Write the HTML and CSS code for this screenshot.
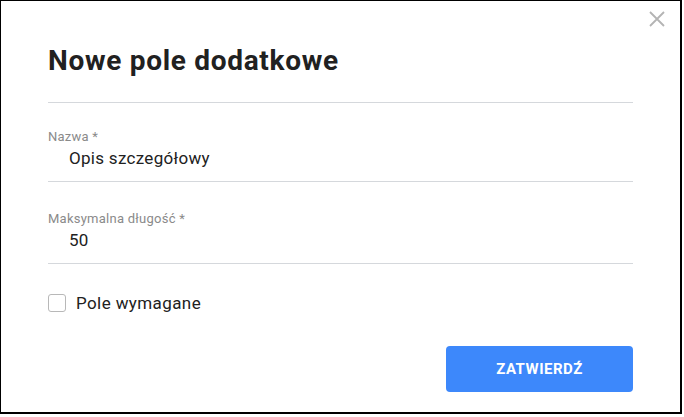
FILE: index.html
```html
<!DOCTYPE html>
<html lang="pl">
<head>
    <meta charset="UTF-8">
    <title>Nowe pole dodatkowe</title>
    <link rel="stylesheet" href="styles.css">
</head>
<body>
  <div id="dialog">
    <button id="closeBtn" aria-label="Zamknij">
      <svg width="16" height="16" viewBox="0 0 16 16"><path d="M1 1L15 15M15 1L1 15" stroke="#b4b4b4" stroke-width="1.8" fill="none"/></svg>
    </button>
    <h1 id="title">Nowe pole dodatkowe</h1>
    <div class="divider"></div>

    <div class="field first">
      <label for="nameInput">Nazwa *</label>
      <input id="nameInput" type="text" value="Opis szczegółowy">
    </div>
    <div class="field">
      <label for="lengthInput">Maksymalna długość *</label>
      <input id="lengthInput" type="text" value="50">
    </div>

    <label class="check">
      <span class="box"></span>
      <span>Pole wymagane</span>
    </label>

    <div id="actions">
      <button id="submitBtn">ZATWIERDŹ</button>
    </div>
  </div>
</body>
</html>
```

FILE: styles.css
```css
body
{
    margin: 0;
    font-family: Roboto, "Liberation Sans", sans-serif;
    background: #fff;
}
#dialog
{
    position: relative;
    width: 682px;
    height: 414px;
    border: 1px solid #000;
    border-width: 1px 2px 2px 1px;
    padding: 0 47px;
    box-sizing: border-box;
}
#closeBtn
{
    position: absolute;
    top: 10px;
    right: 15px;
    padding: 0;
    border: none;
    background: none;
    width: 16px;
    height: 16px;
}
#title
{
    margin: 0;
    padding-top: 43px;
    height: 58px;
    font-size: 28px;
    font-weight: 700;
    letter-spacing: 0.7px;
    color: #212121;
    line-height: 34px;
}
.divider
{
    height: 1px;
    background: #d5d8dc;
}
.field
{
    display: flex;
    flex-direction: column;
    border-bottom: 1px solid #d5d8dc;
    box-sizing: border-box;
    height: 82px;
    padding-top: 29px;
}
.field.first
{
    height: 79px;
    padding-top: 26px;
}
.field label
{
    font-size: 13px;
    letter-spacing: 0.25px;
    color: #8a8a8a;
    line-height: 15px;
}
.field input
{
    border: none;
    outline: none;
    padding: 0 0 0 21px;
    margin-top: 3px;
    font-family: inherit;
    font-size: 17px;
    letter-spacing: 0.3px;
    color: #212121;
    line-height: 22px;
    height: 22px;
    background: none;
}
.check
{
    display: flex;
    align-items: center;
    gap: 10px;
    margin-top: 29px;
    font-size: 17px;
    letter-spacing: 0.4px;
    color: #212121;
}
.box
{
    width: 16px;
    height: 16px;
    border: 1.5px solid #b8b8b8;
    border-radius: 3px;
}
#actions
{
    display: flex;
    justify-content: flex-end;
    margin-top: 33px;
}
#submitBtn
{
    width: 187px;
    height: 46px;
    border: none;
    border-radius: 4px;
    background: #3d88fb;
    color: #fff;
    font-family: inherit;
    font-size: 15px;
    font-weight: 700;
    letter-spacing: 0.5px;
}
```
